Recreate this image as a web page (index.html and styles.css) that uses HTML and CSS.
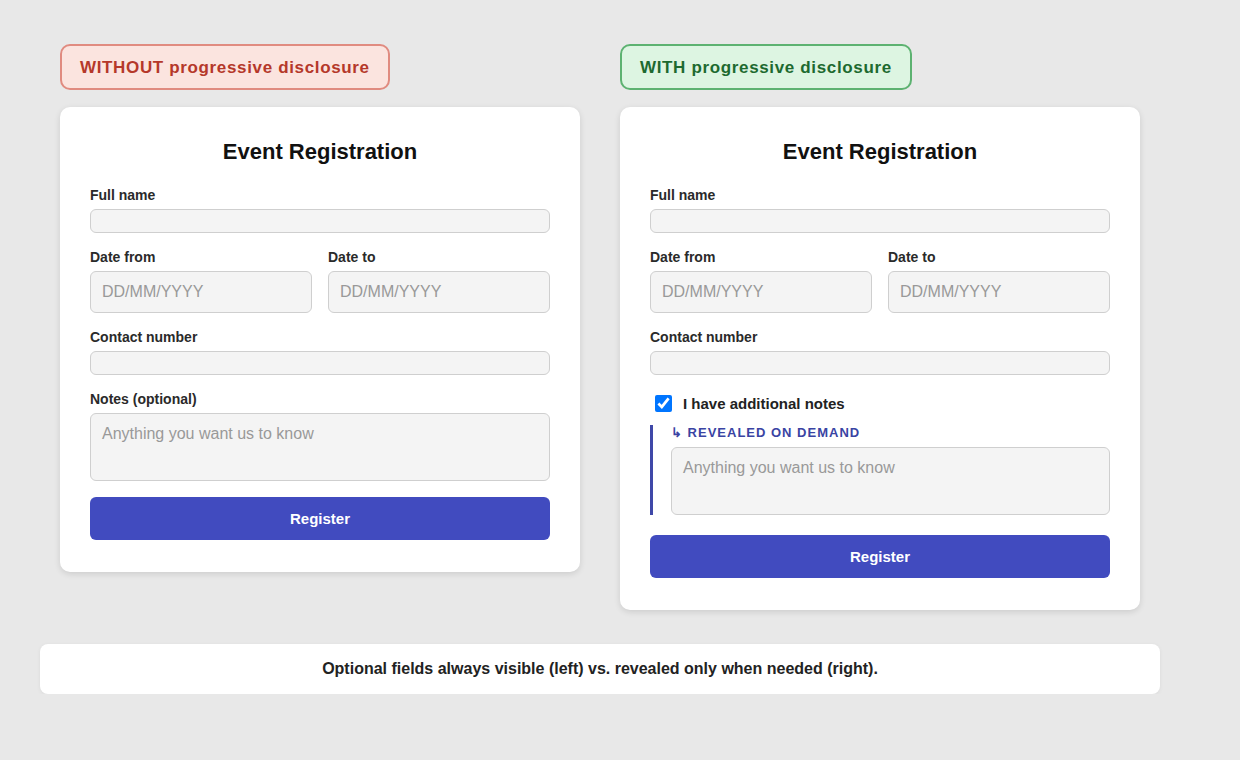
FILE: index.html
```html
<!DOCTYPE html>
<html lang="en">

<head>
    <meta charset="UTF-8">
    <meta name="viewport" content="width=device-width, initial-scale=1.0">
    <title>Progressive Disclosure</title>
    <link rel="stylesheet" href="styles.css">
</head>

<body>
    <div class="page">
        <div class="columns">
            <!-- 왼쪽: 항상 보이는 선택 항목 -->
            <div class="column">
                <div class="tag tag-bad">WITHOUT progressive disclosure</div>
                <form class="card" onsubmit="event.preventDefault()">
                    <h2 class="card-title">Event Registration</h2>
                    <div class="field">
                        <label class="field-label">Full name</label>
                        <input type="text" class="text-input">
                    </div>
                    <div class="field-row">
                        <div class="field">
                            <label class="field-label">Date from</label>
                            <input type="text" class="text-input date-input" placeholder="DD/MM/YYYY">
                        </div>
                        <div class="field">
                            <label class="field-label">Date to</label>
                            <input type="text" class="text-input date-input" placeholder="DD/MM/YYYY">
                        </div>
                    </div>
                    <div class="field">
                        <label class="field-label">Contact number</label>
                        <input type="text" class="text-input">
                    </div>
                    <div class="field">
                        <label class="field-label">Notes (optional)</label>
                        <textarea class="notes-input" placeholder="Anything you want us to know"></textarea>
                    </div>
                    <button type="submit" class="register-button">Register</button>
                </form>
            </div>

            <!-- 오른쪽: 체크하면 나타나는 선택 항목 -->
            <div class="column">
                <div class="tag tag-good">WITH progressive disclosure</div>
                <form class="card" onsubmit="event.preventDefault()">
                    <h2 class="card-title">Event Registration</h2>
                    <div class="field">
                        <label class="field-label">Full name</label>
                        <input type="text" class="text-input">
                    </div>
                    <div class="field-row">
                        <div class="field">
                            <label class="field-label">Date from</label>
                            <input type="text" class="text-input date-input" placeholder="DD/MM/YYYY">
                        </div>
                        <div class="field">
                            <label class="field-label">Date to</label>
                            <input type="text" class="text-input date-input" placeholder="DD/MM/YYYY">
                        </div>
                    </div>
                    <div class="field">
                        <label class="field-label">Contact number</label>
                        <input type="text" class="text-input">
                    </div>
                    <label class="check-row">
                        <input type="checkbox" id="notesToggle" class="check-box" checked onchange="toggleNotes(this)">
                        I have additional notes
                    </label>
                    <div class="revealed" id="revealedArea">
                        <div class="revealed-label">↳ Revealed on demand</div>
                        <textarea class="notes-input" placeholder="Anything you want us to know"></textarea>
                    </div>
                    <button type="submit" class="register-button register-button-spaced">Register</button>
                </form>
            </div>
        </div>

        <div class="caption">Optional fields always visible (left) vs. revealed only when needed (right).</div>
    </div>

    <script>
        // 체크박스로 메모 영역 보이기/숨기기
        function toggleNotes(box) {
            document.getElementById('revealedArea').style.display = box.checked ? 'block' : 'none';
        }
    </script>
</body>

</html>
```

FILE: styles.css
```css
body {
    margin: 0;
    background-color: #e8e8e8;
    font-family: "Liberation Sans", Arial, sans-serif;
    color: #222;
}

.page {
    width: 1120px;
    margin-left: 40px;
    padding-top: 44px;
}

.columns {
    display: flex;
    align-items: flex-start;
    gap: 40px;
    padding: 0 20px;
}

.column {
    width: 520px;
    display: flex;
    flex-direction: column;
    align-items: flex-start;
}

.tag {
    padding: 11px 18px 9px;
    border: 2px solid;
    border-radius: 10px;
    font-size: 17px;
    font-weight: bold;
    line-height: 22px;
    letter-spacing: 0.65px;
    margin-bottom: 17px;
}

.tag-bad {
    background-color: #fbe4df;
    border-color: #e08b80;
    color: #b5382a;
}

.tag-good {
    background-color: #ddf5e2;
    border-color: #5db271;
    color: #1d6a30;
}

.card {
    width: 100%;
    box-sizing: border-box;
    background-color: white;
    border-radius: 10px;
    padding: 32px 30px 32px;
    box-shadow: 0 2px 6px rgba(0, 0, 0, 0.12);
}

.card-title {
    margin: 0 0 23px;
    font-size: 22px;
    line-height: 25px;
    text-align: center;
    color: #111;
}

.field {
    display: flex;
    flex-direction: column;
    margin-bottom: 16px;
    flex: 1;
}

.field-row {
    display: flex;
    gap: 16px;
}

.field-label {
    font-size: 14px;
    font-weight: bold;
    line-height: 16px;
    color: #2a2a2a;
    margin-bottom: 6px;
}

.text-input,
.notes-input {
    box-sizing: border-box;
    width: 100%;
    height: 24px;
    padding: 0 11px;
    background-color: #f4f4f4;
    border: 1px solid #cfcfcf;
    border-radius: 6px;
    font-family: inherit;
    font-size: 16px;
    outline: none;
}

.date-input {
    height: 42px;
}

.notes-input {
    display: block;
    height: 68px;
    padding: 11px 11px;
    resize: none;
}

.text-input::placeholder,
.notes-input::placeholder {
    color: #999;
}

.check-row {
    display: flex;
    align-items: center;
    height: 24px;
    margin-top: 16px;
    font-size: 15px;
    font-weight: bold;
    color: #222;
}

.check-box {
    width: 17px;
    height: 17px;
    margin: 0 11px 0 5px;
}

.revealed {
    margin-top: 10px;
    border-left: 3px solid #3f48a8;
    padding-left: 18px;
}

.revealed-label {
    font-size: 13px;
    font-weight: bold;
    line-height: 16px;
    text-transform: uppercase;
    letter-spacing: 1px;
    color: #3a44a3;
    margin-bottom: 6px;
}

.register-button {
    width: 100%;
    height: 43px;
    background-color: #414bbf;
    color: white;
    border: none;
    border-radius: 6px;
    font-family: inherit;
    font-size: 15px;
    font-weight: bold;
    cursor: pointer;
}

.register-button-spaced {
    margin-top: 20px;
}

.caption {
    margin-top: 34px;
    background-color: white;
    border-radius: 8px;
    height: 50px;
    line-height: 50px;
    text-align: center;
    font-size: 16px;
    font-weight: bold;
    color: #222;
    box-shadow: 0 1px 4px rgba(0, 0, 0, 0.06);
}
```
